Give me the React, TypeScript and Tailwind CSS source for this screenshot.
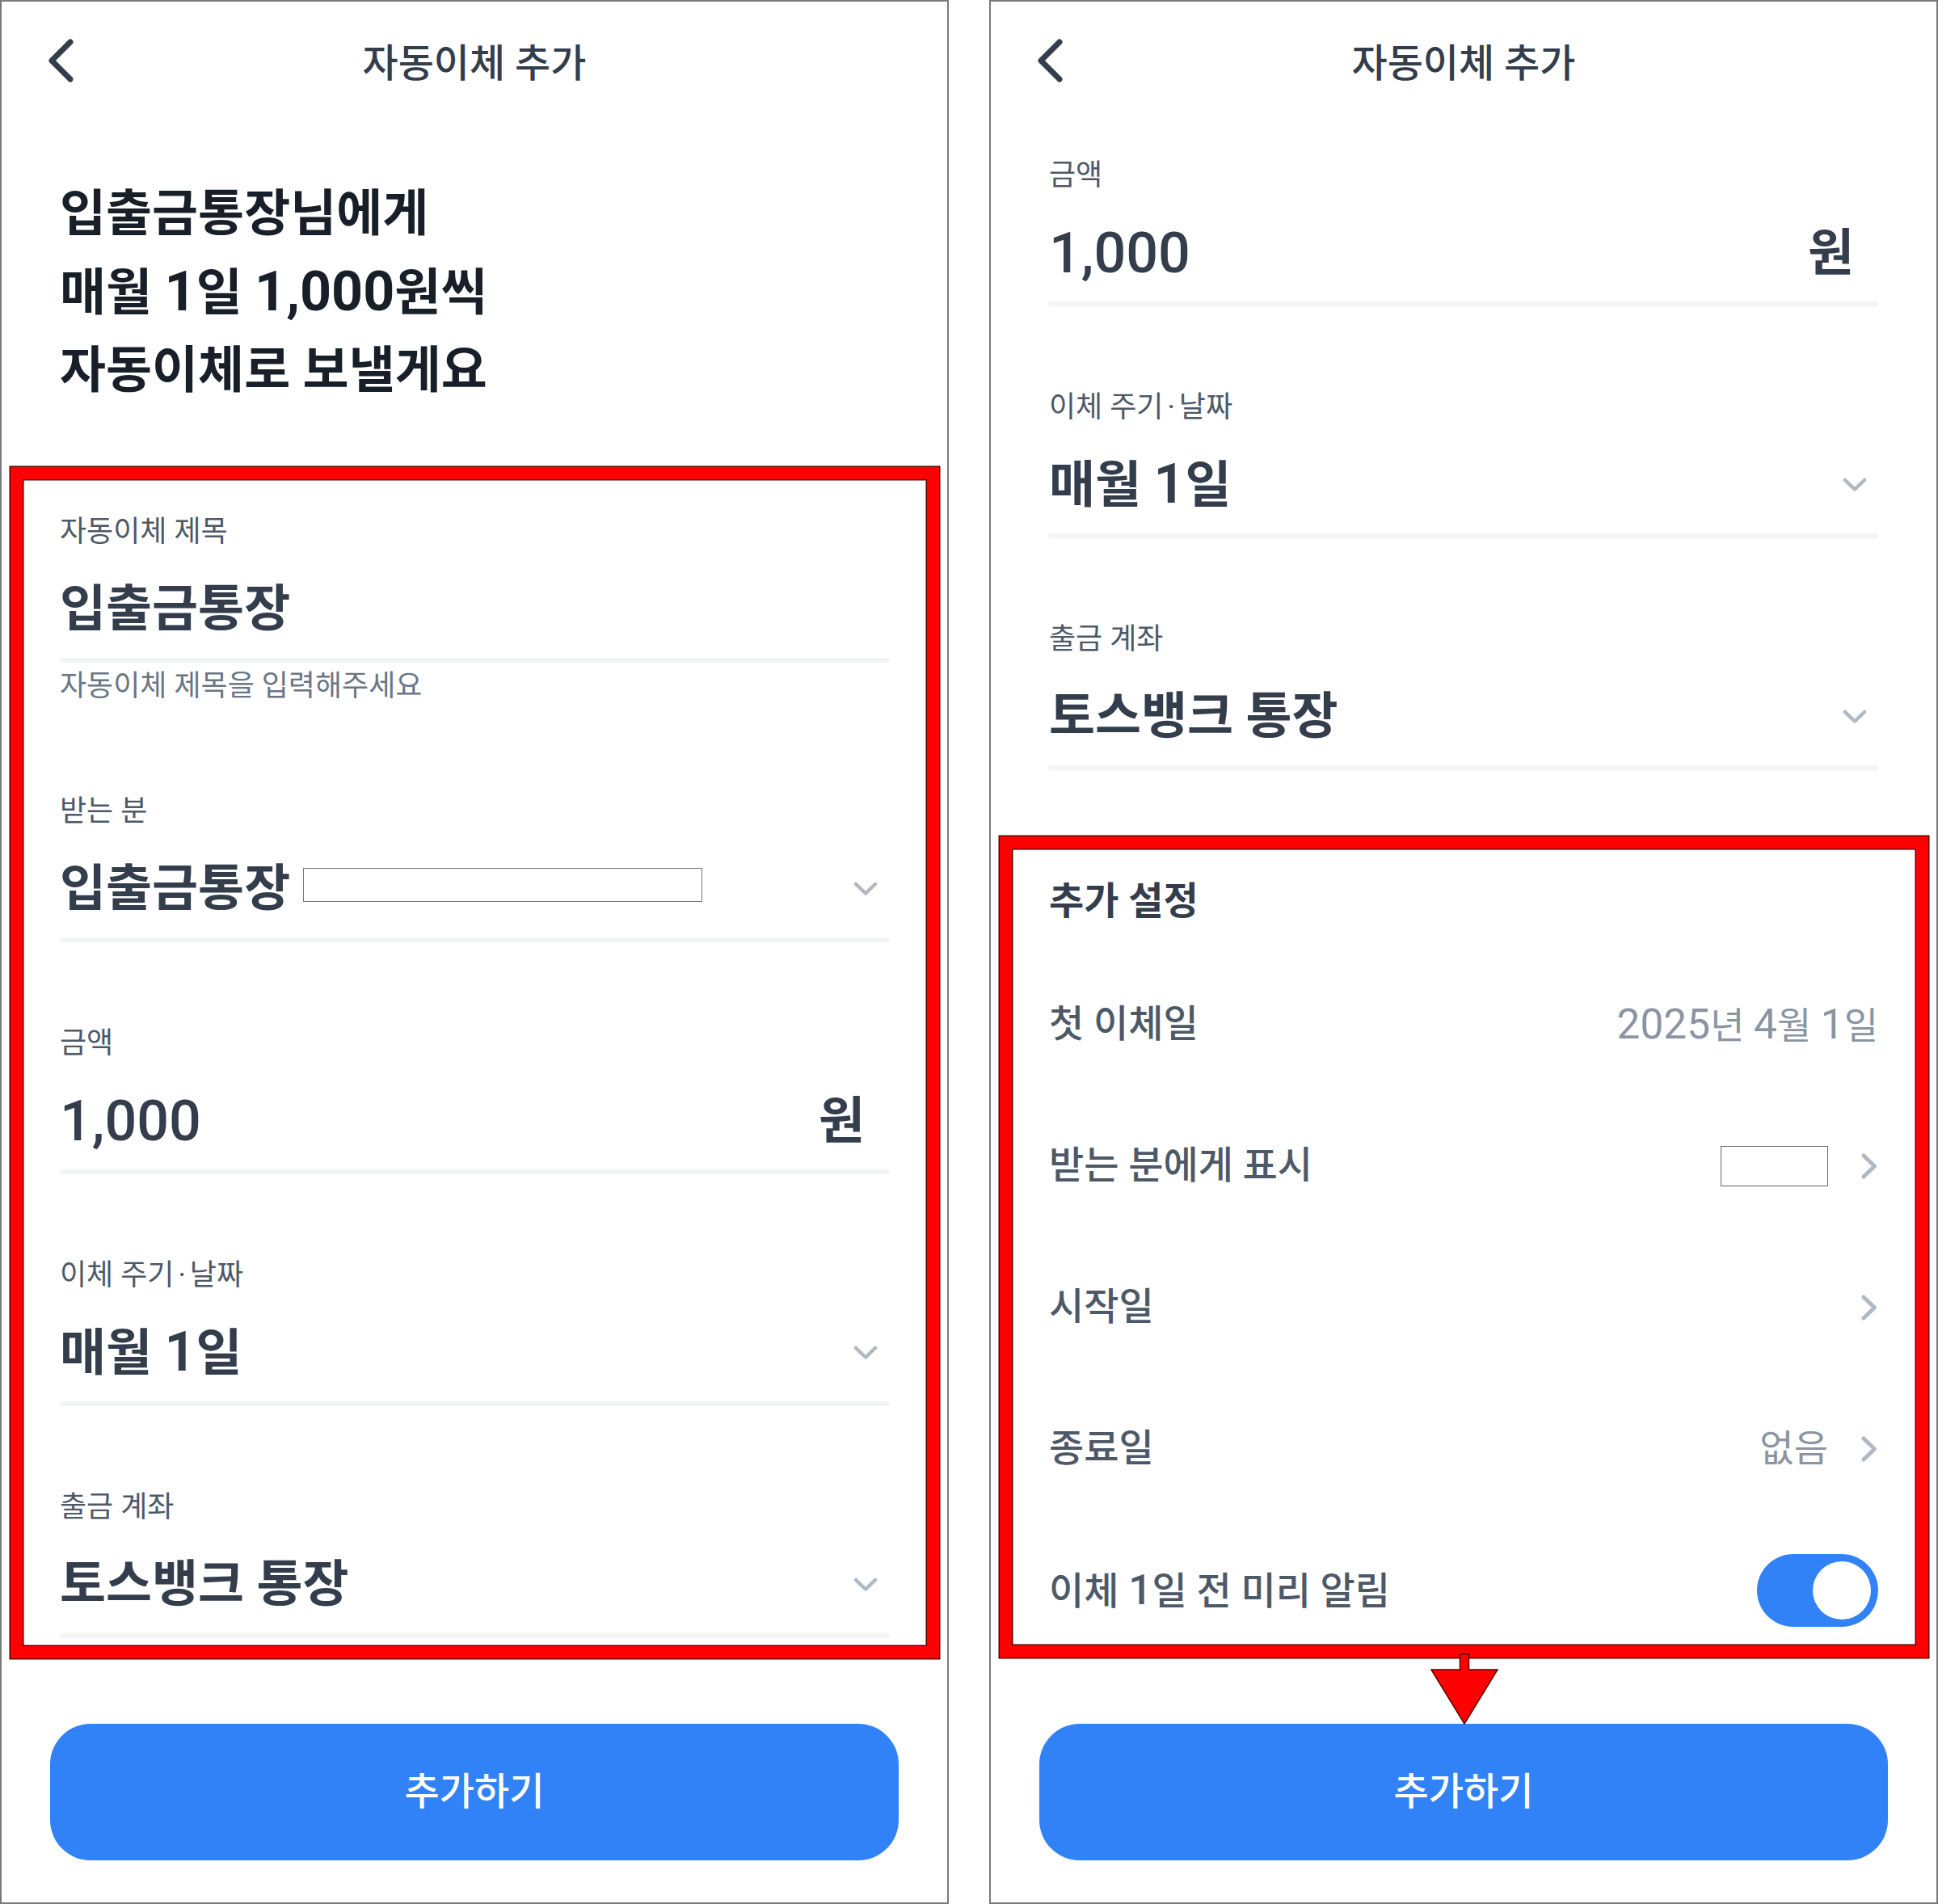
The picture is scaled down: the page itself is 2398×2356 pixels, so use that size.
import type { ReactNode } from 'react';

// digits in the reference font sit larger than the Hangul around them
function Num({ children, className = 'text-[1.1em]' }: { children: ReactNode; className?: string }) {
  return <span className={`${className} tracking-normal`}>{children}</span>;
}

function BackIcon() {
  return (
    <svg width="36" height="56" viewBox="0 0 36 56" fill="none" className="mb-[8px]">
      <path d="M30 5 L7 28 L30 51" stroke="#333d4b" strokeWidth="7" strokeLinecap="round" strokeLinejoin="round" />
    </svg>
  );
}

function ChevronDown() {
  return (
    <svg width="30" height="18" viewBox="0 0 30 18" fill="none" className="mr-[14px]">
      <path d="M3 3 L15 14.5 L27 3" stroke="#b0b8c1" strokeWidth="4.5" strokeLinecap="round" strokeLinejoin="round" />
    </svg>
  );
}

function ChevronRight() {
  return (
    <svg width="22" height="34" viewBox="0 0 22 34" fill="none">
      <path d="M4 4 L17.5 17 L4 30" stroke="#b0b8c1" strokeWidth="5" strokeLinecap="round" strokeLinejoin="round" />
    </svg>
  );
}

function Header() {
  return (
    <div className="flex h-[154px] items-center px-[55px]">
      <BackIcon />
      <div className="flex-1 text-center text-[48px] font-medium text-[#333d4b]">자동이체 추가</div>
      <div className="w-[36px]" />
    </div>
  );
}

const periodLabel = (
  <>
    이체 주기<span className="mx-[5px]">·</span>날짜
  </>
);

function Field({
  label,
  children,
  right,
  helper,
}: {
  label: ReactNode;
  children: ReactNode;
  right?: ReactNode;
  helper?: string;
}) {
  return (
    <div>
      <div className="text-[36px] leading-[48px] text-[#4e5968]">{label}</div>
      <div className="mt-[32px] flex h-[80px] items-center">
        <div className="flex flex-1 items-center text-[62px] font-semibold leading-[80px] text-[#333d4b]">
          {children}
        </div>
        {right}
      </div>
      <div className="mt-[20px] h-[6px] bg-[#f2f4f6]" />
      {helper && <div className="mb-[8px] mt-[7px] text-[36px] leading-[44px] text-[#6b7684]">{helper}</div>}
    </div>
  );
}

function RedBox({ className }: { className: string }) {
  return (
    <div
      className={`pointer-events-none absolute border-[15px] border-[#ff0000] shadow-[0_0_0_1.5px_#5c0000,inset_0_0_0_1.5px_#5c0000] ${className}`}
    />
  );
}

function SubmitButton() {
  return (
    <div className="mt-auto px-[60px] pb-[52px]">
      <button className="h-[169px] w-full rounded-[50px] bg-[#3182f6] text-[47px] font-medium text-white">
        추가하기
      </button>
    </div>
  );
}

function Panel({ children }: { children: ReactNode }) {
  return (
    <div className="relative flex h-[2356px] w-[1174px] flex-col border-2 border-[#7a7a7a] bg-white">{children}</div>
  );
}

function SettingRow({ label, children }: { label: ReactNode; children?: ReactNode }) {
  return (
    <div className="flex h-[175px] items-center justify-between">
      <div className="text-[47px] font-medium text-[#4e5968]">{label}</div>
      <div className="flex items-center text-[46px] text-[#8b95a1]">{children}</div>
    </div>
  );
}

function Toggle() {
  return (
    <div className="flex h-[90px] w-[150px] items-center justify-end rounded-full bg-[#3182f6] pr-[9px]">
      <div className="h-[72px] w-[72px] rounded-full bg-white" />
    </div>
  );
}

const unit = <span className="mr-[30px] text-[62px] font-semibold text-[#333d4b]">원</span>;

export default function App() {
  return (
    <div className="flex h-[2356px] w-[2398px] gap-[50px] bg-white font-['Roboto','Noto_Sans_CJK_KR',sans-serif]">
      {/* left screen */}
      <Panel>
        <Header />
        <div className="mt-[61px] px-[72px] text-[62px] font-bold leading-[96px] text-[#191f28]">
          <div>입출금통장님에게</div>
          <div>
            매월 <Num>1</Num>일 <Num>1,000</Num>원씩
          </div>
          <div>자동이체로 보낼게요</div>
        </div>

        <div className="mt-[127px] flex flex-col gap-[101px] px-[72px]">
          <Field label="자동이체 제목" helper="자동이체 제목을 입력해주세요">
            <span>입출금통장</span>
          </Field>
          <Field label="받는 분" right={<ChevronDown />}>
            <span>입출금통장</span>
            <div className="mb-[10px] ml-[16px] h-[42px] w-[494px] border-[1.5px] border-[#777] bg-white" />
          </Field>
          <Field label="금액" right={unit}>
            <span className="text-[70px] font-medium">1,000</span>
          </Field>
          <Field label={periodLabel} right={<ChevronDown />}>
            <span>
              매월 <Num>1</Num>일
            </span>
          </Field>
          <Field label="출금 계좌" right={<ChevronDown />}>
            <span>토스뱅크 통장</span>
          </Field>
        </div>

        <SubmitButton />
        <RedBox className="left-[11px] top-[576px] h-[1474px] w-[1149px]" />
      </Panel>

      {/* right screen */}
      <Panel>
        <Header />
        <div className="mt-[37px] flex flex-col gap-[101px] px-[72px]">
          <Field label="금액" right={unit}>
            <span className="text-[70px] font-medium">1,000</span>
          </Field>
          <Field label={periodLabel} right={<ChevronDown />}>
            <span>
              매월 <Num>1</Num>일
            </span>
          </Field>
          <Field label="출금 계좌" right={<ChevronDown />}>
            <span>토스뱅크 통장</span>
          </Field>
        </div>

        <div className="mt-[132px] px-[72px]">
          <div className="text-[47px] font-bold leading-[60px] text-[#333d4b]">추가 설정</div>
          <div className="mt-[35px]">
            <SettingRow label="첫 이체일">
              <span>
                <Num className="text-[1.12em]">2025</Num>년 <Num className="text-[1.12em]">4</Num>월{' '}
                <Num className="text-[1.12em]">1</Num>일
              </span>
            </SettingRow>
            <SettingRow label="받는 분에게 표시">
              <div className="h-[50px] w-[133px] border-[1.5px] border-[#666] bg-white" />
              <div className="ml-[40px]">
                <ChevronRight />
              </div>
            </SettingRow>
            <SettingRow label="시작일">
              <ChevronRight />
            </SettingRow>
            <SettingRow label="종료일">
              <span>없음</span>
              <div className="ml-[40px]">
                <ChevronRight />
              </div>
            </SettingRow>
            <SettingRow
              label={
                <span>
                  이체 <Num>1</Num>일 전 미리 알림
                </span>
              }
            >
              <Toggle />
            </SettingRow>
          </div>
        </div>

        <SubmitButton />
        <RedBox className="left-[11px] top-[1033px] h-[1016px] w-[1149px]" />
        <svg
          className="pointer-events-none absolute left-[543px] top-[2044px]"
          width="86"
          height="90"
          viewBox="0 0 86 90"
          fill="none"
        >
          <path
            d="M37.5 1 H48.5 V20 H84 L43 87 L2 20 H37.5 Z"
            fill="#ff0000"
            stroke="#5c0000"
            strokeWidth="1.5"
            strokeLinejoin="miter"
          />
        </svg>
      </Panel>
    </div>
  );
}
